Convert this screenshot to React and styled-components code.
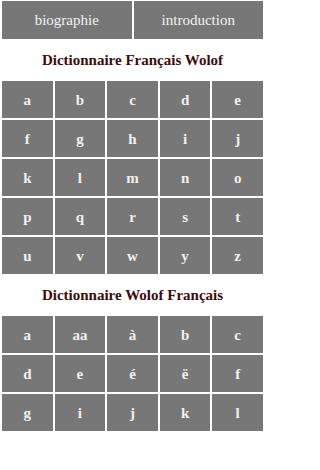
import React from 'react';
import styled, { createGlobalStyle } from 'styled-components';

const GlobalStyle = createGlobalStyle`
  html, body { margin: 0; padding: 0; background: #fff; }
  body { font-family: "Liberation Serif", "Times New Roman", serif; }
`;

const Page = styled.div`
  width: 265px;
  padding: 1px 2px 0 2px;
  box-sizing: border-box;
`;

const Nav = styled.nav`
  display: grid;
  grid-template-columns: 1fr 1fr;
  gap: 2px;
`;

const NavButton = styled.a`
  height: 38px;
  display: flex;
  align-items: center;
  justify-content: center;
  background: #777;
  color: #f2f2f2;
  font-size: 15px;
  text-decoration: none;
`;

const Heading = styled.h2`
  margin: 0;
  height: 42px;
  display: flex;
  align-items: center;
  justify-content: center;
  color: #3d0b0b;
  font-size: 15px;
  font-weight: bold;
`;

const LetterGrid = styled.div`
  display: grid;
  grid-template-columns: repeat(5, 1fr);
  gap: 2px;
`;

const Cell = styled.a`
  height: 37px;
  display: flex;
  align-items: center;
  justify-content: center;
  padding-top: 2px;
  box-sizing: border-box;
  background: #777;
  color: #f0f0f0;
  font-size: 15px;
  font-weight: bold;
  text-decoration: none;
`;

const frWolof = 'a b c d e f g h i j k l m n o p q r s t u v w y z'.split(' ');
const wolofFr = ['a', 'aa', 'à', 'b', 'c', 'd', 'e', 'é', 'ë', 'f', 'g', 'i', 'j', 'k', 'l'];

export default function App() {
  return (
    <Page>
      <GlobalStyle />
      <Nav>
        <NavButton>biographie</NavButton>
        <NavButton>introduction</NavButton>
      </Nav>
      <Heading>Dictionnaire Français Wolof</Heading>
      <LetterGrid>
        {frWolof.map((l) => <Cell key={l}>{l}</Cell>)}
      </LetterGrid>
      <Heading>Dictionnaire Wolof Français</Heading>
      <LetterGrid>
        {wolofFr.map((l) => <Cell key={l}>{l}</Cell>)}
      </LetterGrid>
    </Page>
  );
}
